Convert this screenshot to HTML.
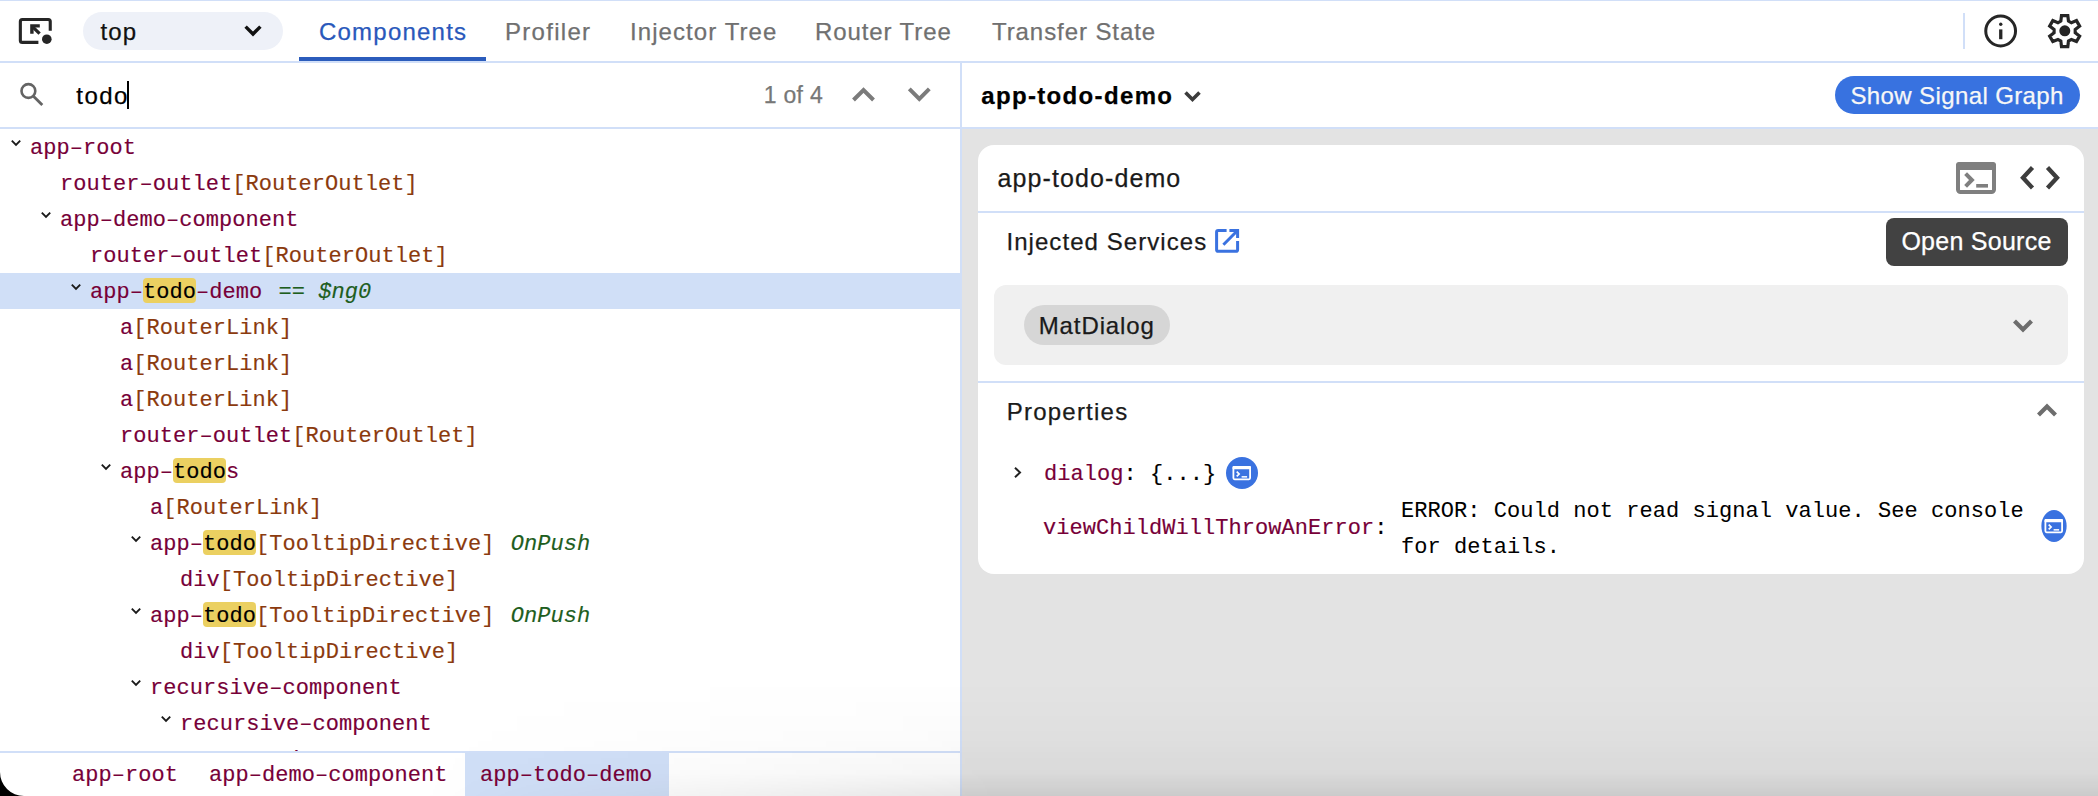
<!DOCTYPE html>
<html>
<head>
<meta charset="utf-8">
<style>
*{box-sizing:border-box;margin:0;padding:0}
html,body{width:2098px;height:796px;overflow:hidden;background:#fff}
body{position:relative;font-family:"Liberation Sans",sans-serif;color:#1f1f1f}
.a{position:absolute}
.t{position:absolute;white-space:pre;line-height:1;font-family:"Liberation Sans",sans-serif;-webkit-text-stroke:0.25px currentColor}
.bl{position:absolute;background:#d1dff8}
.row{position:absolute;left:0;width:960px;height:36px;font-family:"Liberation Mono",monospace;font-size:22px;line-height:36px;white-space:pre;color:#770038;letter-spacing:0.05px;-webkit-text-stroke:0.15px currentColor}
.row span.tx{position:absolute;top:2px;z-index:0}
.row.sel{background:#d0dff7}
.d{color:#8b3a0e}
.g{color:#1e5e1e;font-style:italic;position:relative;left:3px}
.m{position:relative;color:#000}
.m::before{content:"";position:absolute;left:0px;right:0px;top:-2px;height:25px;background:#ebd061;border-radius:4px;z-index:-1}
.row .chev{position:absolute;top:9px}
.crumb{position:absolute;top:753px;height:43px;font-family:"Liberation Mono",monospace;font-size:22px;line-height:43px;color:#770038;white-space:pre;letter-spacing:0.05px;-webkit-text-stroke:0.15px currentColor}
</style>
</head>
<body>

<div class="bl" style="left:0;top:0;width:2098px;height:1px"></div>
<svg class="a" style="left:0;top:0" width="60" height="60" viewBox="0 0 60 60">
<path d="M50.25 30.7 V21.4 Q50.25 19.45 48.3 19.45 H22.3 Q20.35 19.45 20.35 21.4 V40.4 Q20.35 42.35 22.3 42.35 H38.4" fill="none" stroke="#262626" stroke-width="3.1"/>
<path d="M30.2 24.3 H39.8 V27.5 H33.6 V33.7 H30.2 Z" fill="#262626"/>
<path d="M32.4 26.6 L39.6 33.6" stroke="#262626" stroke-width="3.3"/>
<circle cx="46.8" cy="39.2" r="4.8" fill="#262626"/>
</svg>
<div class="a" style="left:83px;top:12px;width:200px;height:38px;border-radius:19px;background:#eef1f8"></div>
<div class="t" style="left:100.4px;top:19.9px;font-size:24px;font-weight:400;letter-spacing:1.2px;color:#111;">top</div>
<svg class="a" style="left:240px;top:20px" width="26" height="20" viewBox="0 0 26 20"><path d="M5.6 6.6 L13 14 L20.4 6.6" fill="none" stroke="#111" stroke-width="3.4"/></svg>
<div class="t" style="left:319.0px;top:20.0px;font-size:24px;font-weight:400;letter-spacing:1.22px;color:#2958bb;">Components</div>
<div class="t" style="left:505.0px;top:20.0px;font-size:24px;font-weight:400;letter-spacing:1.29px;color:#707070;">Profiler</div>
<div class="t" style="left:630.0px;top:20.0px;font-size:24px;font-weight:400;letter-spacing:1.08px;color:#707070;">Injector Tree</div>
<div class="t" style="left:815.0px;top:20.0px;font-size:24px;font-weight:400;letter-spacing:0.9px;color:#707070;">Router Tree</div>
<div class="t" style="left:992.0px;top:20.0px;font-size:24px;font-weight:400;letter-spacing:0.92px;color:#707070;">Transfer State</div>
<div class="a" style="left:299px;top:57px;width:187px;height:4px;background:#2b5cbc"></div>
<div class="bl" style="left:1963px;top:13px;width:2px;height:36px"></div>
<svg class="a" style="left:1980px;top:10px" width="42" height="42" viewBox="0 0 42 42">
<circle cx="20.65" cy="21" r="14.9" fill="none" stroke="#262626" stroke-width="3"/>
<circle cx="20.75" cy="14.3" r="1.7" fill="#262626"/>
<rect x="19.1" y="19.4" width="3.3" height="9.8" fill="#262626"/>
</svg>
<svg class="a" style="left:0;top:0" width="2098" height="60" viewBox="0 0 2098 60">
<path d="M2060.82 21.11 L2061.50 15.62 L2067.80 15.62 L2068.48 21.11 L2071.38 22.78 L2076.48 20.63 L2079.63 26.09 L2075.22 29.43 L2075.22 32.77 L2079.63 36.11 L2076.48 41.57 L2071.38 39.42 L2068.48 41.09 L2067.80 46.58 L2061.50 46.58 L2060.82 41.09 L2057.92 39.42 L2052.82 41.57 L2049.67 36.11 L2054.08 32.77 L2054.08 29.43 L2049.67 26.09 L2052.82 20.63 L2057.92 22.78 Z" fill="none" stroke="#262626" stroke-width="3.2" stroke-linejoin="miter"/>
<circle cx="2064.8" cy="30.85" r="5.5" fill="#262626"/>
</svg>
<div class="bl" style="left:0;top:61px;width:2098px;height:2px"></div>
<svg class="a" style="left:0;top:60px" width="60" height="60" viewBox="0 60 60 60">
<circle cx="28.4" cy="91" r="6.9" fill="none" stroke="#646464" stroke-width="2.6"/>
<path d="M33.2 96 L42.3 105.1" stroke="#646464" stroke-width="2.8"/>
</svg>
<div class="t" style="left:76.3px;top:83.9px;font-size:24px;font-weight:400;letter-spacing:1.43px;color:#000;">todo</div>
<div class="a" style="left:127px;top:81px;width:2px;height:28px;background:#000"></div>
<div class="t" style="left:763.7px;top:84.0px;font-size:23px;font-weight:400;letter-spacing:0.32px;color:#777;">1 of 4</div>
<svg class="a" style="left:840px;top:70px" width="110" height="50" viewBox="840 70 110 50">
<path d="M853.5 100 L863.5 90 L873.5 100" fill="none" stroke="#7b7b7b" stroke-width="4"/>
<path d="M909.3 88.8 L919.3 98.8 L929.3 88.8" fill="none" stroke="#7b7b7b" stroke-width="4"/>
</svg>
<div class="bl" style="left:960px;top:63px;width:2px;height:733px"></div>
<div class="t" style="left:981.2px;top:83.9px;font-size:24px;font-weight:700;letter-spacing:1.35px;color:#000;">app-todo-demo</div>
<svg class="a" style="left:1178px;top:84px" width="30" height="24" viewBox="0 0 30 24"><path d="M7.5 8.5 L14.5 15.5 L21.5 8.5" fill="none" stroke="#3c3c3c" stroke-width="3.6"/></svg>
<div class="a" style="left:1835px;top:76px;width:245px;height:38px;border-radius:19px;background:#3872e0"></div>
<div class="t" style="left:1850.4px;top:84.0px;font-size:24px;font-weight:400;letter-spacing:0.39px;color:#f7f7f7;">Show Signal Graph</div>
<div class="bl" style="left:0;top:127px;width:2098px;height:2px"></div>
<div class="a" style="left:0;top:129px;width:960px;height:622px;overflow:hidden">
<div class="row" style="top:0px"><svg class="chev" style="left:9px" width="15" height="11" viewBox="0 0 15 11"><path d="M2.8 2.6 L7 6.8 L11.2 2.6" fill="none" stroke="#1a1a1a" stroke-width="1.9"/></svg><span class="tx" style="left:30px">app–root</span></div>
<div class="row" style="top:36px"><span class="tx" style="left:60px">router–outlet<span class="d">[RouterOutlet]</span></span></div>
<div class="row" style="top:72px"><svg class="chev" style="left:39px" width="15" height="11" viewBox="0 0 15 11"><path d="M2.8 2.6 L7 6.8 L11.2 2.6" fill="none" stroke="#1a1a1a" stroke-width="1.9"/></svg><span class="tx" style="left:60px">app–demo–component</span></div>
<div class="row" style="top:108px"><span class="tx" style="left:90px">router–outlet<span class="d">[RouterOutlet]</span></span></div>
<div class="row sel" style="top:144px"><svg class="chev" style="left:69px" width="15" height="11" viewBox="0 0 15 11"><path d="M2.8 2.6 L7 6.8 L11.2 2.6" fill="none" stroke="#1a1a1a" stroke-width="1.9"/></svg><span class="tx" style="left:90px">app–<span class="m">todo</span>–demo <span style="color:#1e5e1e;position:relative;left:3px">==</span> <span class="g">$ng0</span></span></div>
<div class="row" style="top:180px"><span class="tx" style="left:120px">a<span class="d">[RouterLink]</span></span></div>
<div class="row" style="top:216px"><span class="tx" style="left:120px">a<span class="d">[RouterLink]</span></span></div>
<div class="row" style="top:252px"><span class="tx" style="left:120px">a<span class="d">[RouterLink]</span></span></div>
<div class="row" style="top:288px"><span class="tx" style="left:120px">router–outlet<span class="d">[RouterOutlet]</span></span></div>
<div class="row" style="top:324px"><svg class="chev" style="left:99px" width="15" height="11" viewBox="0 0 15 11"><path d="M2.8 2.6 L7 6.8 L11.2 2.6" fill="none" stroke="#1a1a1a" stroke-width="1.9"/></svg><span class="tx" style="left:120px">app–<span class="m">todo</span>s</span></div>
<div class="row" style="top:360px"><span class="tx" style="left:150px">a<span class="d">[RouterLink]</span></span></div>
<div class="row" style="top:396px"><svg class="chev" style="left:129px" width="15" height="11" viewBox="0 0 15 11"><path d="M2.8 2.6 L7 6.8 L11.2 2.6" fill="none" stroke="#1a1a1a" stroke-width="1.9"/></svg><span class="tx" style="left:150px">app–<span class="m">todo</span><span class="d">[TooltipDirective]</span> <span class="g">OnPush</span></span></div>
<div class="row" style="top:432px"><span class="tx" style="left:180px">div<span class="d">[TooltipDirective]</span></span></div>
<div class="row" style="top:468px"><svg class="chev" style="left:129px" width="15" height="11" viewBox="0 0 15 11"><path d="M2.8 2.6 L7 6.8 L11.2 2.6" fill="none" stroke="#1a1a1a" stroke-width="1.9"/></svg><span class="tx" style="left:150px">app–<span class="m">todo</span><span class="d">[TooltipDirective]</span> <span class="g">OnPush</span></span></div>
<div class="row" style="top:504px"><span class="tx" style="left:180px">div<span class="d">[TooltipDirective]</span></span></div>
<div class="row" style="top:540px"><svg class="chev" style="left:129px" width="15" height="11" viewBox="0 0 15 11"><path d="M2.8 2.6 L7 6.8 L11.2 2.6" fill="none" stroke="#1a1a1a" stroke-width="1.9"/></svg><span class="tx" style="left:150px">recursive–component</span></div>
<div class="row" style="top:576px"><svg class="chev" style="left:159px" width="15" height="11" viewBox="0 0 15 11"><path d="M2.8 2.6 L7 6.8 L11.2 2.6" fill="none" stroke="#1a1a1a" stroke-width="1.9"/></svg><span class="tx" style="left:180px">recursive–component</span></div>
<div class="row" style="top:612px"><svg class="chev" style="left:189px" width="15" height="11" viewBox="0 0 15 11"><path d="M2.8 2.6 L7 6.8 L11.2 2.6" fill="none" stroke="#1a1a1a" stroke-width="1.9"/></svg><span class="tx" style="left:210px">recursive–component</span></div>
</div>
<div class="bl" style="left:0;top:751px;width:960px;height:2px"></div>
<div class="a" style="left:465px;top:753px;width:204px;height:43px;background:#d0dff7"></div>
<div class="crumb" style="left:72px;top:754px">app–root</div>
<div class="crumb" style="left:209px;top:754px">app–demo–component</div>
<div class="crumb" style="left:480px;top:754px">app–todo–demo</div>
<div class="a" style="left:962px;top:129px;width:1136px;height:667px;background:#e3e3e3"></div>
<div class="a" style="left:978px;top:145px;width:1106px;height:429px;background:#fff;border-radius:16px"></div>
<div class="t" style="left:997.5px;top:165.8px;font-size:25px;font-weight:400;letter-spacing:1.1px;color:#1a1a1a;">app-todo-demo</div>
<svg class="a" style="left:1950px;top:155px" width="120" height="45" viewBox="1950 155 120 45">
<rect x="1958" y="163.9" width="36" height="28.1" rx="2.5" fill="none" stroke="#7f7f7f" stroke-width="4"/>
<rect x="1956" y="161.9" width="40" height="8" rx="3" fill="#7f7f7f"/>
<path d="M1965.6 173.6 L1971.9 180 L1965.6 186.4" fill="none" stroke="#7f7f7f" stroke-width="4"/>
<rect x="1976.2" y="184" width="11.8" height="3.6" fill="#7f7f7f"/>
<path d="M2032.5 167.5 L2023 177.8 L2032.5 188" fill="none" stroke="#3d3d3d" stroke-width="4.3"/>
<path d="M2047.5 167.5 L2057 177.8 L2047.5 188" fill="none" stroke="#3d3d3d" stroke-width="4.3"/>
</svg>
<div class="bl" style="left:978px;top:211px;width:1106px;height:2px"></div>
<div class="t" style="left:1006.4px;top:229.8px;font-size:24px;font-weight:400;letter-spacing:1.07px;color:#1a1a1a;">Injected Services</div>
<svg class="a" style="left:1205px;top:222px" width="40" height="40" viewBox="1205 222 40 40">
<path d="M1226.6 230.5 H1218.2 Q1216.6 230.5 1216.6 232.1 V249.7 Q1216.6 251.3 1218.2 251.3 H1236 Q1237.6 251.3 1237.6 249.7 V241.1" fill="none" stroke="#3a72e0" stroke-width="3"/>
<path d="M1229.4 230.5 H1237.6 V237.9" fill="none" stroke="#3a72e0" stroke-width="3"/>
<path d="M1236.8 231.3 L1223.4 244.7" stroke="#3a72e0" stroke-width="3"/>
</svg>
<div class="a" style="left:1886px;top:218px;width:182px;height:48px;border-radius:8px;background:#424242"></div>
<div class="t" style="left:1901.4px;top:229.4px;font-size:25px;font-weight:400;letter-spacing:0.26px;color:#fff;">Open Source</div>
<div class="a" style="left:994px;top:285px;width:1074px;height:80px;border-radius:12px;background:#f0f0f0"></div>
<div class="a" style="left:1024px;top:305px;width:146px;height:40px;border-radius:20px;background:#d6d6d6"></div>
<div class="t" style="left:1038.7px;top:314.2px;font-size:24px;font-weight:400;letter-spacing:0.9px;color:#1a1a1a;">MatDialog</div>
<svg class="a" style="left:2000px;top:300px" width="90" height="130" viewBox="2000 300 90 130">
<path d="M2014.5 321 L2023 329.5 L2031.5 321" fill="none" stroke="#6d6d6d" stroke-width="4.2"/>
<path d="M2038.5 415 L2047 406.5 L2055.5 415" fill="none" stroke="#6d6d6d" stroke-width="4.2"/>
</svg>
<div class="bl" style="left:978px;top:381px;width:1106px;height:2px"></div>
<div class="t" style="left:1006.7px;top:399.7px;font-size:24px;font-weight:400;letter-spacing:1.23px;color:#1a1a1a;">Properties</div>
<svg class="a" style="left:1005px;top:460px" width="25" height="25" viewBox="1005 460 25 25"><path d="M1015 467.8 L1020 472.5 L1015 477.2" fill="none" stroke="#222" stroke-width="2"/></svg>
<div class="t" style="left:1044px;top:464px;font-family:'Liberation Mono',monospace;font-size:22px;letter-spacing:0.05px;-webkit-text-stroke:0.15px currentColor;line-height:22px;color:#000"><span style="color:#770038">dialog</span>: {...}</div>
<svg class="a" style="left:1221.9px;top:452.9px" width="40" height="40" viewBox="1221.9 452.9 40 40">
<ellipse cx="1241.9" cy="472.9" rx="16.0" ry="16" fill="#3a72e0"/>
<rect x="1233.3000000000002" y="466.79999999999995" width="16.7" height="12.4" rx="1.2" fill="none" stroke="#fff" stroke-width="1.8"/>
<rect x="1232.4" y="465.9" width="18.5" height="3.3" rx="1" fill="#fff"/>
<path d="M1236.6000000000001 471.5 L1239.0 473.9 L1236.6000000000001 476.29999999999995" fill="none" stroke="#fff" stroke-width="1.7"/>
<rect x="1241.5" y="476.0" width="5.5" height="1.5" fill="#fff"/>
</svg>
<div class="t" style="left:1043px;top:518px;font-family:'Liberation Mono',monospace;font-size:22px;letter-spacing:0.05px;-webkit-text-stroke:0.15px currentColor;line-height:22px;color:#770038">viewChildWillThrowAnError<span style="color:#000">:</span></div>
<div class="t" style="left:1401px;top:493.5px;font-family:'Liberation Mono',monospace;font-size:22px;letter-spacing:0.05px;-webkit-text-stroke:0.05px currentColor;line-height:36px;color:#000">ERROR: Could not read signal value. See console
for details.</div>
<svg class="a" style="left:2033.6px;top:505.70000000000005px" width="40" height="40" viewBox="2033.6 505.70000000000005 40 40">
<ellipse cx="2053.6" cy="525.7" rx="12.64" ry="16" fill="#3a72e0"/>
<rect x="2045.0" y="519.6" width="16.7" height="12.4" rx="1.2" fill="none" stroke="#fff" stroke-width="1.8"/>
<rect x="2044.1" y="518.7" width="18.5" height="3.3" rx="1" fill="#fff"/>
<path d="M2048.2999999999997 524.3000000000001 L2050.7 526.7 L2048.2999999999997 529.1" fill="none" stroke="#fff" stroke-width="1.7"/>
<rect x="2053.2" y="528.8000000000001" width="5.5" height="1.5" fill="#fff"/>
</svg>
<div class="a" style="left:0;top:680px;width:2098px;height:116px;background:linear-gradient(to bottom, rgba(0,0,0,0) 0%, rgba(0,0,0,0.015) 50%, rgba(0,0,0,0.04) 80%, rgba(0,0,0,0.1) 100%);-webkit-mask-image:linear-gradient(to right, transparent 420px, #000 1000px);mask-image:linear-gradient(to right, transparent 420px, #000 1000px);pointer-events:none"></div>
<svg class="a" style="left:0;top:766px" width="30" height="30" viewBox="0 766 30 30"><path d="M0 772 V796 H24 A24 24 0 0 1 0 772 Z" fill="#000"/></svg>
</body></html>
